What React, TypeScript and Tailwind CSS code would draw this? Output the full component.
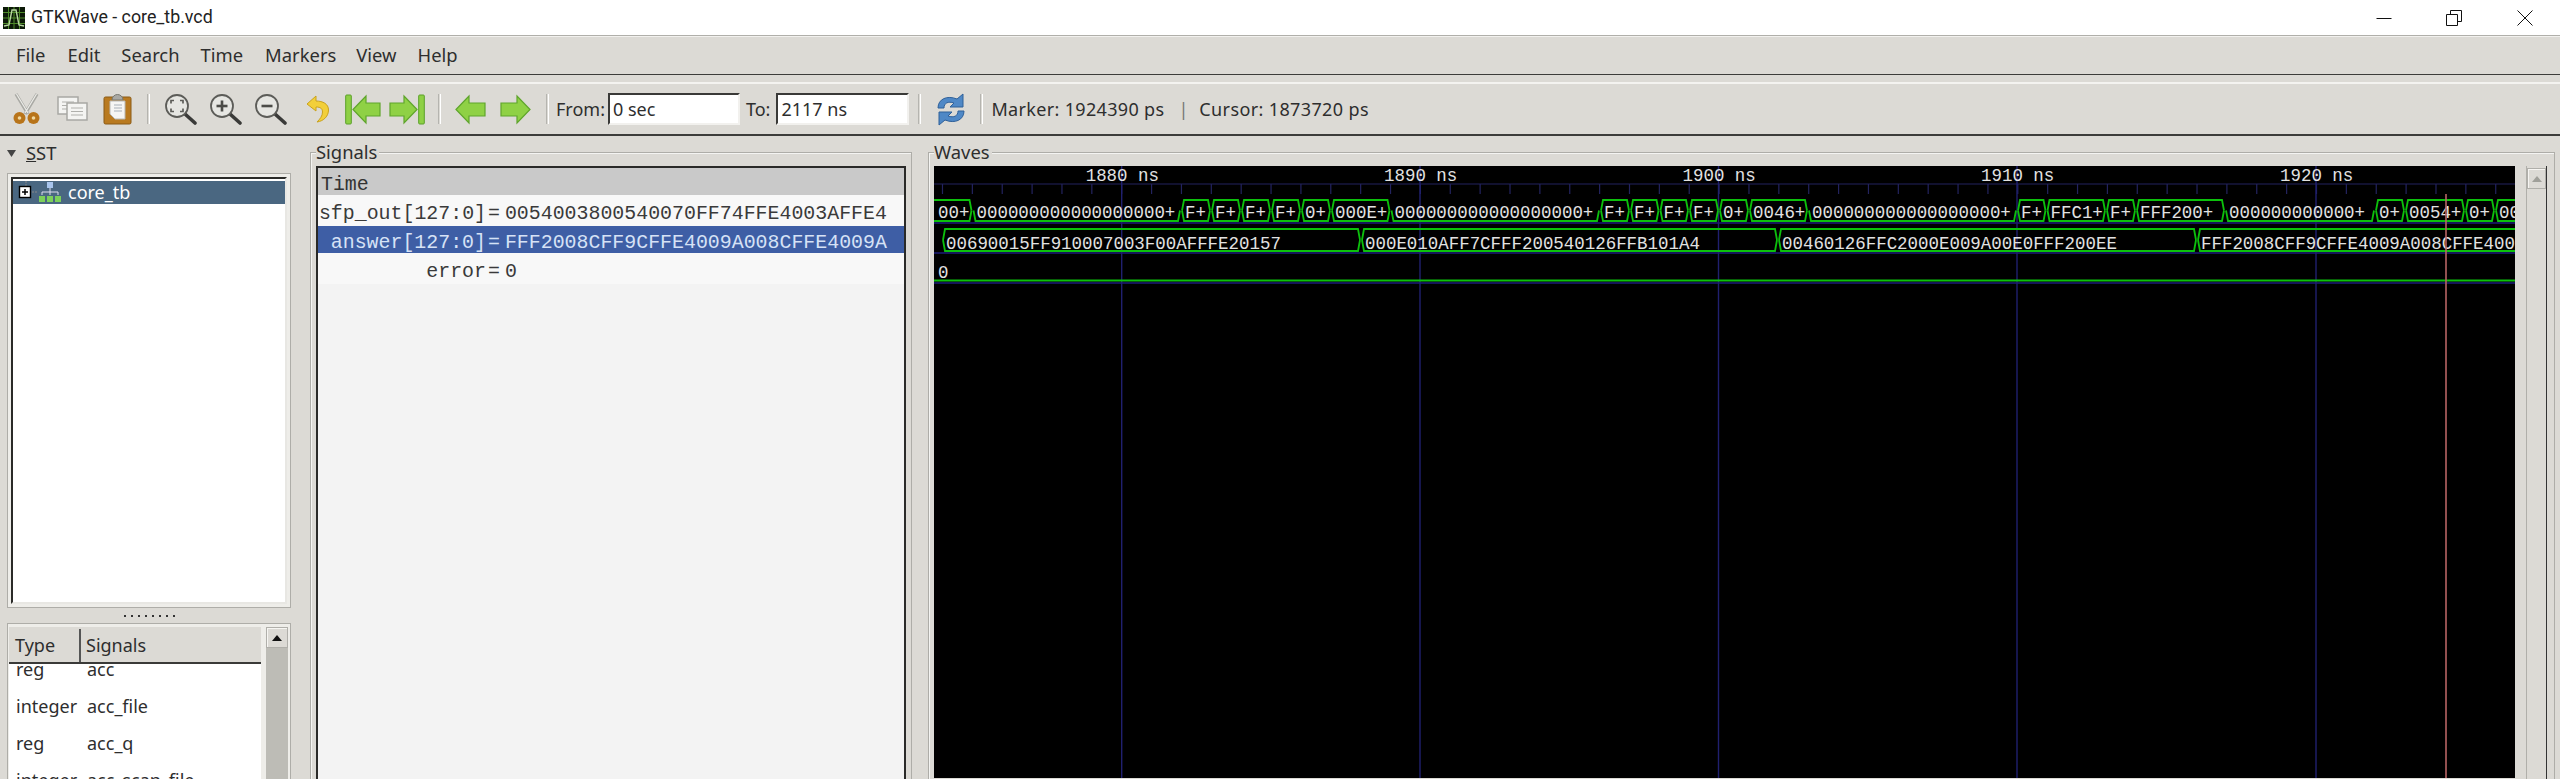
import React from "react";

const MONO = "font-['Liberation_Mono',monospace]";

type Seg = { a: number; b: number; top?: boolean; text?: string; tx?: number };

const row1: Seg[] = [
  { a: 925, b: 972.5, top: true, text: "00+", tx: 938 },
  { a: 972.5, b: 1181, text: "000000000000000000+" },
  { a: 1181, b: 1211, top: true, text: "F+" },
  { a: 1211, b: 1241, top: true, text: "F+" },
  { a: 1241, b: 1271, top: true, text: "F+" },
  { a: 1271, b: 1301, top: true, text: "F+" },
  { a: 1301, b: 1331, top: true, text: "0+" },
  { a: 1331, b: 1390.5, top: true, text: "000E+" },
  { a: 1390.5, b: 1600, text: "000000000000000000+" },
  { a: 1600, b: 1630, top: true, text: "F+" },
  { a: 1630, b: 1659.5, top: true, text: "F+" },
  { a: 1659.5, b: 1689, top: true, text: "F+" },
  { a: 1689, b: 1719, top: true, text: "F+" },
  { a: 1719, b: 1749, top: true, text: "0+" },
  { a: 1749, b: 1808, top: true, text: "0046+" },
  { a: 1808, b: 2017, text: "000000000000000000+" },
  { a: 2017, b: 2046.5, top: true, text: "F+" },
  { a: 2046.5, b: 2106, top: true, text: "FFC1+" },
  { a: 2106, b: 2136, top: true, text: "F+" },
  { a: 2136, b: 2225, top: true, text: "FFF200+" },
  { a: 2225, b: 2375, text: "000000000000+" },
  { a: 2375, b: 2405, top: true, text: "0+" },
  { a: 2405, b: 2465, top: true, text: "0054+" },
  { a: 2465, b: 2495, top: true, text: "0+" },
  { a: 2495, b: 2560, top: true, text: "00" },
];

const row2: Seg[] = [
  { a: 942, b: 1361, top: true, text: "00690015FF910007003F00AFFFE20157" },
  { a: 1361, b: 1778, top: true, text: "000E010AFF7CFFF200540126FFB101A4" },
  { a: 1778, b: 2197, top: true, text: "00460126FFC2000E009A00E0FFF200EE" },
  { a: 2197, b: 2620, top: true, text: "FFF2008CFF9CFFE4009A008CFFE4009A" },
];

const majors = [
  { x: 1121.7, label: "1880 ns" },
  { x: 1420, label: "1890 ns" },
  { x: 1718.5, label: "1900 ns" },
  { x: 2017, label: "1910 ns" },
  { x: 2316, label: "1920 ns" },
];

function VectorRow({ segs, top, bottom, base }: { segs: Seg[]; top: number; bottom: number; base: number }) {
  const mid = (top + bottom) / 2;
  return (
    <g>
      {segs.map((s, i) => (
        <g key={i}>
          <path
            d={`M${s.a + 1} ${mid} L${s.a + 3} ${bottom} L${s.b - 3} ${bottom} L${s.b - 1} ${mid}`}
            fill="none"
            stroke="#0cc00c"
            strokeWidth="1.8"
          />
          {s.top && (
            <path
              d={`M${s.a + 1} ${mid} L${s.a + 3} ${top} L${s.b - 3} ${top} L${s.b - 1} ${mid}`}
              fill="none"
              stroke="#0cc00c"
              strokeWidth="1.8"
            />
          )}
          <text x={s.tx ?? s.a + 4} y={base} fill="#e2e2e2" fontSize="17.45">
            {s.text}
          </text>
        </g>
      ))}
    </g>
  );
}

function WaveCanvas() {
  const ticks: number[] = [];
  for (let i = -6; i <= 46; i++) ticks.push(1121.7 + i * 29.87);
  return (
    <svg
      viewBox="934 167 1581 612"
      width="1581"
      height="612"
      className={`block bg-black ${MONO}`}
    >
      {ticks.map((x) => (
        <line key={x} x1={x} x2={x} y1="185" y2="195" stroke="#23235f" strokeWidth="1.2" />
      ))}
      <line x1="934" x2="2515" y1="185" y2="185" stroke="#23235f" />
      <line x1="934" x2="2515" y1="224" y2="224" stroke="#1c1c78" strokeWidth="1.4" />
      <line x1="934" x2="2515" y1="254" y2="254" stroke="#1c1c78" strokeWidth="1.4" />
      <line x1="934" x2="2515" y1="284" y2="284" stroke="#1c1c78" strokeWidth="1.4" />
      {majors.map((m) => (
        <line key={m.x} x1={m.x} x2={m.x} y1="167" y2="779" stroke="#20206f" strokeWidth="1.4" />
      ))}
      {majors.map((m) => (
        <text key={m.label} x={m.x - 36} y="182" fill="#e2e2e2" fontSize="17.45">
          {m.label}
        </text>
      ))}
      <VectorRow segs={row1} top={201} bottom={222} base={219} />
      <VectorRow segs={row2} top={230} bottom={252} base={250} />
      <line x1="934" x2="2515" y1="281.5" y2="281.5" stroke="#0cc00c" strokeWidth="1.8" />
      <text x="938" y="279" fill="#e2e2e2" fontSize="17.45">
        0
      </text>
      <line x1="2446" x2="2446" y1="195" y2="779" stroke="#b86464" strokeWidth="1.6" />
    </svg>
  );
}

function Scissors() {
  return (
    <svg width="27" height="32" viewBox="0 0 27 32">
      <path d="M3 1 L15 21 M24 1 L12 21" stroke="#a9a9a4" strokeWidth="3.4" fill="none" />
      <path d="M3.5 1 L15 20 M23.5 1 L12 20" stroke="#ecece8" strokeWidth="1.2" fill="none" />
      <circle cx="6.5" cy="25" r="6" fill="#b8741a" />
      <circle cx="20.5" cy="25" r="6" fill="#b8741a" />
      <circle cx="6.5" cy="25" r="1.8" fill="#f0d9a0" />
      <circle cx="20.5" cy="25" r="1.8" fill="#f0d9a0" />
    </svg>
  );
}

function Sheet({ x, y }: { x: number; y: number }) {
  return (
    <g>
      <rect x={x} y={y} width="20" height="17" fill="#f4f4f2" stroke="#a8a8a4" strokeWidth="1.5" />
      <path
        d={`M${x + 4} ${y + 5} h12 M${x + 4} ${y + 8.5} h12 M${x + 4} ${y + 12} h12`}
        stroke="#b0b0ac"
        strokeWidth="1"
      />
    </g>
  );
}

function Copy() {
  return (
    <svg width="31" height="26" viewBox="0 0 31 26">
      <Sheet x={1} y={1} />
      <Sheet x={10} y={7} />
    </svg>
  );
}

function Paste() {
  return (
    <svg width="29" height="32" viewBox="0 0 29 32">
      <rect x="1" y="4" width="27" height="27" rx="1.5" fill="#b97a20" stroke="#8a5a16" />
      <path d="M9 7 a5.5 5.5 0 0 1 11 0 z" fill="#a8a8a4" stroke="#77776f" />
      <path d="M7 8 h15 v18 h-10 l-5 -5 z" fill="#f6f6f4" stroke="#b8b8b4" />
      <path d="M11 12 h8 M11 15 h8 M11 18 h8" stroke="#a8b0b8" strokeWidth="1.2" />
    </svg>
  );
}

function Glass({ mode }: { mode: "fit" | "in" | "out" }) {
  return (
    <svg width="33" height="31" viewBox="0 0 33 31">
      <path d="M21 20 L31 29" stroke="#3a3a38" strokeWidth="3.6" strokeLinecap="round" />
      <circle cx="13" cy="12" r="11" fill="#e6e6e2" stroke="#5c5c58" strokeWidth="1.8" />
      {mode === "fit" && (
        <path
          d="M7 9.5 V6.5 H10 M16 6.5 H19 V9.5 M19 14.5 V17.5 H16 M10 17.5 H7 V14.5"
          fill="none"
          stroke="#5c5c58"
          strokeWidth="1.7"
        />
      )}
      {mode !== "fit" && <path d="M7.5 12 H18.5" stroke="#4c4c48" strokeWidth="2.6" />}
      {mode === "in" && <path d="M13 6.5 V17.5" stroke="#4c4c48" strokeWidth="2.6" />}
    </svg>
  );
}

function Undo() {
  return (
    <svg width="23" height="29" viewBox="0 0 23 29">
      <path
        d="M10 1 L1 9 L10 16 V12 C15 12 16.5 14 16.5 17 C16.5 21 14 24 11 27 C18 26 22.5 21 22.5 15 C22.5 9 17 6 10 6 Z"
        fill="#f2cf3a"
        stroke="#c9a21e"
      />
    </svg>
  );
}

function GreenArrow({ dir, bar }: { dir: "l" | "r"; bar?: boolean }) {
  const w = bar ? 36 : 31;
  const head = bar ? 7 : 0;
  const flip = dir === "r";
  return (
    <svg width={w} height="31" viewBox={`0 0 ${w} 31`}>
      <g transform={flip ? `translate(${w},0) scale(-1,1)` : undefined}>
        {bar && <rect x="0.7" y="1" width="5.6" height="29" rx="1" fill="#8ed045" stroke="#5aa028" />}
        <path
          d={`M${head + 1} 15.5 L${head + 14} 2 V9 H${w - 1} V22 H${head + 14} V29 Z`}
          fill="#8fd145"
          stroke="#5fa52c"
          strokeWidth="1.2"
        />
      </g>
    </svg>
  );
}

function Refresh() {
  return (
    <svg width="30" height="33" viewBox="0 0 30 33">
      <path d="M2 15 C2 6 11 2 21 6 L27 1 V14 H14 L18 10 C12 8 8 10 8 15 Z" fill="#4f88c6" stroke="#2f6099" />
      <path d="M28 18 C28 27 19 31 9 27 L3 32 V19 H16 L12 23 C18 25 22 23 22 18 Z" fill="#4f88c6" stroke="#2f6099" />
    </svg>
  );
}

function ToolSep({ className }: { className: string }) {
  return <div className={`h-[30px] w-[3px] border-x border-l-[#b5b4af] border-r-white ${className}`} />;
}

function AppIcon() {
  return (
    <svg width="22" height="22" viewBox="0 0 22 22" className="ml-[3px]">
      <rect width="22" height="22" fill="#0c1a08" />
      <path
        d="M0 5.5H22 M0 11H22 M0 16.5H22 M5.5 0V22 M11 0V22 M16.5 0V22"
        stroke="#4f8a2a"
        strokeWidth="1"
      />
      <path d="M1 19 L6 18 L9 3 H13 L16 18 L21 19" stroke="#b8d8a0" strokeWidth="1.4" fill="none" />
    </svg>
  );
}

function Frame({ label, className, children }: { label: string; className: string; children: React.ReactNode }) {
  return (
    <div className={`relative mt-[16px] h-[700px] border border-[#aeada8] shadow-[inset_1px_1px_0_#f4f4f2] ${className}`}>
      <span className="absolute left-[5px] top-[-13px] bg-[#dcdad5] pr-[2px] text-[18.4px] leading-[24px] text-[#2e2e2e]">
        {label}
      </span>
      {children}
    </div>
  );
}

function TypeRow({ type, name, className }: { type: string; name: string; className?: string }) {
  return (
    <div className={`flex h-[37px] items-center text-[18px] text-[#2e2e2e] ${className ?? ""}`}>
      <span className="w-[78px] pl-[7px]">{type}</span>
      <span>{name}</span>
    </div>
  );
}

function SignalRow({ name, value, className }: { name: string; value: string; className: string }) {
  return (
    <div className={`flex items-center pt-[7px] text-[19.9px] ${className}`}>
      <span className="w-[168px] whitespace-pre text-right">{name}</span>
      <span className="ml-[2px]">=</span>
      <span className="ml-[5px] whitespace-pre">{value}</span>
    </div>
  );
}

export default function App() {
  return (
    <div className="flex h-[779px] w-[2560px] flex-col overflow-hidden bg-[#dcdad5] font-['Noto_Sans',sans-serif] text-[#2e2e2e]">
      {/* title bar */}
      <div className="flex h-[35px] shrink-0 items-center bg-white">
        <AppIcon />
        <span className="ml-[6px] font-['Roboto',sans-serif] text-[17.8px] text-[#222]">GTKWave - core_tb.vcd</span>
        <div className="ml-auto flex items-center pr-[27px]">
          <svg width="16" height="16" viewBox="0 0 16 16">
            <path d="M0.5 8.5H15.5" stroke="#111" />
          </svg>
          <svg width="16" height="16" viewBox="0 0 16 16" className="ml-[54px]">
            <path d="M0.5 4.5H11.5V15.5H0.5Z M4.5 4.5V0.5H15.5V11.5H11.5" fill="none" stroke="#111" />
          </svg>
          <svg width="16" height="16" viewBox="0 0 16 16" className="ml-[55px]">
            <path d="M0.5 0.5L15.5 15.5M15.5 0.5L0.5 15.5" stroke="#111" />
          </svg>
        </div>
      </div>

      {/* menu bar */}
      <div className="flex h-[40px] shrink-0 items-center border-y border-t-[#b0afaa] border-b-[#3c3c3a] pl-[16px] text-[18.4px] shadow-[inset_0_1px_0_#f2f1ee]">
        <span>File</span>
        <span className="ml-[22px]">Edit</span>
        <span className="ml-[21px]">Search</span>
        <span className="ml-[21px]">Time</span>
        <span className="ml-[22px]">Markers</span>
        <span className="ml-[20px]">View</span>
        <span className="ml-[21px]">Help</span>
      </div>

      {/* toolbar */}
      <div className="mt-[7px] flex h-[54px] shrink-0 items-center border-t-2 border-b-2 border-t-[#f4f3f0] border-b-[#3c3c3a] pl-[13px] text-[18px]">
        <Scissors />
        <div className="ml-[17px]">
          <Copy />
        </div>
        <div className="ml-[15px]">
          <Paste />
        </div>
        <ToolSep className="ml-[15px]" />
        <div className="ml-[14px]">
          <Glass mode="fit" />
        </div>
        <div className="ml-[12px]">
          <Glass mode="in" />
        </div>
        <div className="ml-[12px]">
          <Glass mode="out" />
        </div>
        <div className="ml-[19px]">
          <Undo />
        </div>
        <div className="ml-[16px]">
          <GreenArrow dir="l" bar />
        </div>
        <div className="ml-[8px]">
          <GreenArrow dir="r" bar />
        </div>
        <ToolSep className="ml-[13px]" />
        <div className="ml-[14px]">
          <GreenArrow dir="l" />
        </div>
        <div className="ml-[14px]">
          <GreenArrow dir="r" />
        </div>
        <ToolSep className="ml-[15px]" />
        <span className="ml-[7px]">From:</span>
        <input
          readOnly
          value="0 sec"
          className="ml-[3px] h-[32px] w-[132px] border-2 border-t-[#3a3a38] border-l-[#3a3a38] border-r-[#f2f1ee] border-b-[#f2f1ee] bg-white pl-[3px] outline-none"
        />
        <span className="ml-[6px]">To:</span>
        <input
          readOnly
          value="2117 ns"
          className="ml-[6px] h-[32px] w-[133px] border-2 border-t-[#3a3a38] border-l-[#3a3a38] border-r-[#f2f1ee] border-b-[#f2f1ee] bg-white pl-[3px] outline-none"
        />
        <ToolSep className="ml-[9px]" />
        <div className="ml-[15px]">
          <Refresh />
        </div>
        <ToolSep className="ml-[14px]" />
        <span className="ml-[8px] whitespace-pre tracking-[0.33px]">Marker: 1924390 ps</span>
        <span className="ml-[14px] text-[#777]">|</span>
        <span className="ml-[11px] whitespace-pre tracking-[0.38px]">Cursor: 1873720 ps</span>
      </div>

      {/* panes */}
      <div className="flex min-h-0 flex-1 overflow-hidden pr-[5px]">
        {/* left pane */}
        <div className="flex w-[296px] shrink-0 flex-col pl-[7px]">
          <div className="flex h-[37px] shrink-0 items-center text-[18.4px]">
            <svg width="9" height="7" viewBox="0 0 9 7" className="mb-[2px]">
              <path d="M0 0H9L4.5 7Z" fill="#444" />
            </svg>
            <span className="ml-[10px] pb-[3px]">
              <span className="underline">S</span>ST
            </span>
          </div>
          <div className="h-[435px] w-[284px] shrink-0 border border-[#aeada8] bg-[#eeede9] p-[3px]">
            <div className="h-full border-2 border-t-[#2a2a28] border-l-[#2a2a28] border-r-[#e8e7e3] border-b-[#e8e7e3] bg-white pt-[2px]">
              <div className="flex h-[23px] items-center bg-[#4a6781] text-[18px] text-white">
                <svg width="50" height="23" viewBox="0 0 50 23">
                  <path d="M13 0V6 M19 11H24" stroke="#888" strokeDasharray="2 1" />
                  <rect x="6.5" y="5.5" width="11" height="11" fill="#fff" stroke="#000" strokeWidth="1.4" />
                  <path d="M9 11H15 M12 8V14" stroke="#000" strokeWidth="1.5" />
                  <rect x="34" y="1" width="6" height="6" fill="#a8c4ec" />
                  <path d="M37 7V11 M29 14V11H45V14 M37 11V14" stroke="#dde" fill="none" />
                  <rect x="26" y="15" width="6" height="6" fill="#7cd05a" />
                  <rect x="34" y="15" width="6" height="6" fill="#7cd05a" />
                  <rect x="42" y="15" width="6" height="6" fill="#7cd05a" />
                </svg>
                <span className="ml-[5px]">core_tb</span>
              </div>
            </div>
          </div>
          <div className="flex h-[15px] w-[284px] shrink-0 items-center justify-center gap-[5px]">
            {[0, 1, 2, 3, 4, 5, 6, 7].map((i) => (
              <span key={i} className="h-[2px] w-[2px] bg-[#333]" />
            ))}
          </div>
          <div className="flex h-[200px] w-[284px] shrink-0 border border-[#aeada8] bg-[#eeede9] pl-[1px] pr-[2px] pt-[3px]">
            <div className="h-full w-[252px] overflow-hidden bg-white">
              <div className="flex h-[37px] border-b-2 border-b-[#3a3a38] bg-[#dcdad5] pt-[2px] text-[18px]">
                <span className="flex w-[72px] items-center border-r-2 border-r-[#555] pl-[6px]">Type</span>
                <span className="flex flex-1 items-center pl-[5px]">Signals</span>
              </div>
              <TypeRow type="reg" name="acc" className="mt-[-13px]" />
              <TypeRow type="integer" name="acc_file" />
              <TypeRow type="reg" name="acc_q" />
              <TypeRow type="integer" name="acc_scan_file" />
            </div>
            <div className="ml-[5px] w-[22px] shrink-0 bg-[#bdbcb6]">
              <div className="flex h-[21px] items-center justify-center border border-[#b0afaa] bg-[#dcdad5] shadow-[inset_1px_1px_0_#f6f5f2]">
                <svg width="10" height="6" viewBox="0 0 10 6">
                  <path d="M5 0L10 6H0Z" fill="#111" />
                </svg>
              </div>
            </div>
          </div>
        </div>

        {/* signals pane */}
        <Frame label="Signals" className="ml-[14px] w-[602px] shrink-0 px-[5px] pt-[13px]">
          <div className={`h-full border-t-2 border-x-2 border-x-[#2a2a28] border-t-[#2a2a28] bg-[#f3f3f3] ${MONO}`}>
            <div className="flex h-[27px] items-center bg-[#c9c9c9] pl-[3px] pt-[7px] text-[19.9px] text-[#333]">Time</div>
            <SignalRow
              name="sfp_out[127:0]"
              value="0054003800540070FF74FFE4003AFFE4"
              className="h-[31px] bg-[#f8f8f8] text-[#3a3a3a]"
            />
            <SignalRow
              name="answer[127:0]"
              value="FFF2008CFF9CFFE4009A008CFFE4009A"
              className="h-[27px] bg-[#3e5ea5] text-[#d6e2f6]"
            />
            <SignalRow name="error" value="0" className="h-[31px] bg-[#f8f8f8] text-[#3a3a3a]" />
          </div>
        </Frame>

        {/* waves pane */}
        <Frame label="Waves" className="ml-[16px] flex w-[1627px] shrink-0 pl-[5px] pt-[13px]">
          <WaveCanvas />
          <div className="ml-[11px] h-full w-[21px] shrink-0 border-x border-l-[#b0afaa] border-r-[#333]">
            <div className="mt-[2px] flex h-[21px] items-center justify-center border border-[#b0afaa] shadow-[inset_1px_1px_0_#f6f5f2]">
              <svg width="10" height="6" viewBox="0 0 10 6">
                <path d="M5 0L10 6H0Z" fill="#a0a09a" />
              </svg>
            </div>
          </div>
        </Frame>
      </div>
    </div>
  );
}
